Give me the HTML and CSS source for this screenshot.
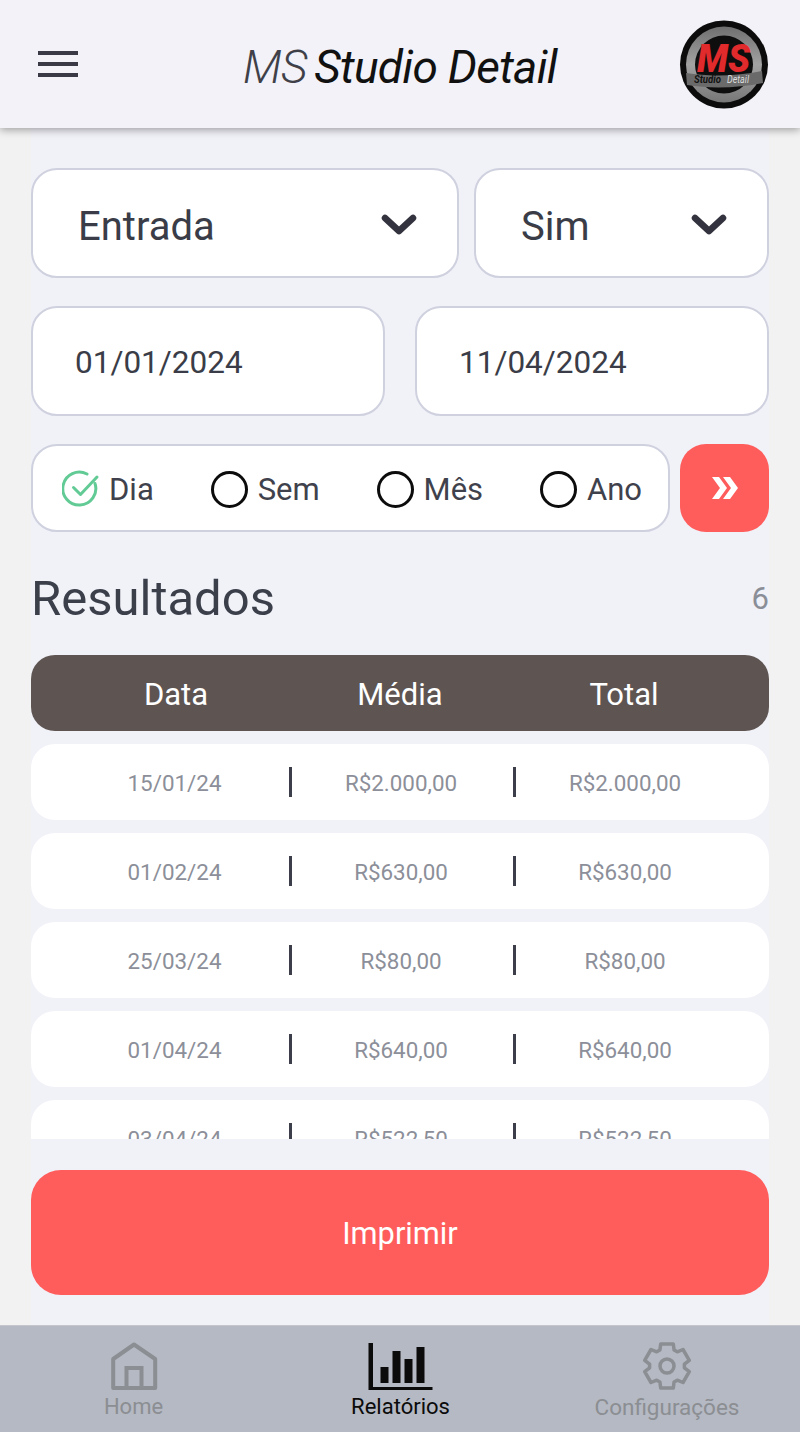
FILE: index.html
```html
<!DOCTYPE html>
<html lang="pt">
<head>
<meta charset="utf-8">
<title>MS Studio Detail</title>
<link rel="stylesheet" href="styles.css">
</head>
<body>
<div class="app">
  <header class="topbar">
    <svg class="menu" viewBox="0 0 40 28" width="40" height="28"><path d="M0 3h40M0 14h40M0 25h40" stroke="#3a3a46" stroke-width="4"/></svg>
    <h1 class="title"><span class="title-ms">MS</span> Studio Detail</h1>
    <svg class="logo" viewBox="0 0 90 90" width="90" height="90">
      <defs>
        <linearGradient id="ring" x1="0" y1="0" x2="0" y2="1">
          <stop offset="0" stop-color="#6f6f6f"/>
          <stop offset=".5" stop-color="#a2a2a2"/>
          <stop offset="1" stop-color="#777"/>
        </linearGradient>
      </defs>
      <circle cx="45" cy="44.500" r="44" fill="#0c0c0c"/>
      <circle cx="45" cy="44.500" r="38" fill="url(#ring)"/>
      <circle cx="45" cy="44.500" r="29" fill="#0e0e0e"/>
      <path d="M7 53c24 4 52 3 76-2l1 12c-25 5-52 6-76 2z" fill="#6a6a6a"/>
      <text class="logo-ms" x="18" y="52" textLength="53" lengthAdjust="spacingAndGlyphs">MS</text>
      <text class="logo-sub" x="15" y="63" textLength="27" lengthAdjust="spacingAndGlyphs">Studio</text>
      <text class="logo-sub2" x="48" y="63" textLength="22" lengthAdjust="spacingAndGlyphs">Detail</text>
    </svg>
  </header>

  <main class="content">
    <div class="row row-selects">
      <div class="field select select-wide"><span>Entrada</span>
        <svg class="chev" viewBox="0 0 36 24" width="36" height="24"><path d="M4 5l14 13L32 5" fill="none" stroke="#33333f" stroke-width="6.500" stroke-linecap="round" stroke-linejoin="round"/></svg>
      </div>
      <div class="field select select-narrow"><span>Sim</span>
        <svg class="chev" viewBox="0 0 36 24" width="36" height="24"><path d="M4 5l14 13L32 5" fill="none" stroke="#33333f" stroke-width="6.500" stroke-linecap="round" stroke-linejoin="round"/></svg>
      </div>
    </div>
    <div class="row row-dates">
      <div class="field date">01/01/2024</div>
      <div class="field date">11/04/2024</div>
    </div>
    <div class="row row-period">
      <div class="field period">
        <div class="opt opt-dia">
          <svg viewBox="0 0 38 38" width="38" height="38"><path d="M33 13.500A16.500 16.500 0 1 1 25 4" fill="none" stroke="#62cb95" stroke-width="3" stroke-linecap="round"/><path d="M11.500 17.500l7 7L35 7" fill="none" stroke="#62cb95" stroke-width="3" stroke-linecap="round" stroke-linejoin="round"/></svg>
          <span>Dia</span>
        </div>
        <div class="opt"><i class="radio"></i><span>Sem</span></div>
        <div class="opt"><i class="radio"></i><span>Mês</span></div>
        <div class="opt"><i class="radio"></i><span>Ano</span></div>
      </div>
      <button class="go" type="button">
        <svg viewBox="0 0 28 24" width="28" height="24"><path d="M1 1h7l8 11-8 11H1l8-11zM12 1h7l8 11-8 11h-7l8-11z" fill="#fff"/></svg>
      </button>
    </div>

    <div class="results-head">
      <h2>Resultados</h2>
      <span class="count">6</span>
    </div>

    <div class="thead"><span>Data</span><span>Média</span><span>Total</span></div>
    <div class="rows">
      <div class="trow"><span class="first">15/01/24</span><span class="mid">R$2.000,00</span><span class="last">R$2.000,00</span></div>
      <div class="trow"><span class="first">01/02/24</span><span class="mid">R$630,00</span><span class="last">R$630,00</span></div>
      <div class="trow"><span class="first">25/03/24</span><span class="mid">R$80,00</span><span class="last">R$80,00</span></div>
      <div class="trow"><span class="first">01/04/24</span><span class="mid">R$640,00</span><span class="last">R$640,00</span></div>
      <div class="trow"><span class="first">03/04/24</span><span class="mid">R$522,50</span><span class="last">R$522,50</span></div>
    </div>

    <button class="print" type="button">Imprimir</button>
  </main>

  <nav class="tabs">
    <div class="tab">
      <svg viewBox="0 0 50 50" width="50" height="50"><path d="M4.200 18L25 3.500 46.200 18v29H4.200z" fill="none" stroke="#8b8e92" stroke-width="4" stroke-linejoin="round"/><path d="M17.500 47V27h15v20" fill="none" stroke="#8b8e92" stroke-width="4"/></svg>
      <span>Home</span>
    </div>
    <div class="tab tab-active">
      <svg viewBox="0 0 66 50" width="66" height="50"><path d="M.500 2h4.500v44h59.500v3H.500z" fill="#0b0b0b"/><path d="M12.500 26h8v16h-8zM24.500 10h8v32h-8zM36.500 18h8v24h-8zM48.500 6h8v36h-8z" fill="#0b0b0b"/></svg>
      <span>Relatórios</span>
    </div>
    <div class="tab tab-config">
      <svg viewBox="0 0 50 50" width="50" height="50"><path d="M17.900 9L18.700 2.900H31.300L32.100 9 35.300 10.800 41 8.500 47.300 19.400 42.400 23.200V26.800L47.300 30.600 41 41.500 35.300 39.200 32.100 41 31.300 47.100H18.700L17.900 41 14.700 39.200 9 41.500 2.700 30.600 7.600 26.800V23.200L2.700 19.400 9 8.500 14.700 10.800z" fill="none" stroke="#8b8e92" stroke-width="3.500" stroke-linejoin="round"/><circle cx="25" cy="25" r="7" fill="none" stroke="#8b8e92" stroke-width="3.500"/></svg>
      <span>Configurações</span>
    </div>
  </nav>
</div>
</body>
</html>
```
FILE: styles.css
```css
* { box-sizing: border-box; }
html, body { margin: 0; padding: 0; }
body {
  background: #f2f2f2;
  font-family: Roboto, "Liberation Sans", sans-serif;
  color: #3a3d47;
}
.app { width: 800px; height: 1432px; display: flex; flex-direction: column; overflow: hidden; }

.topbar {
  height: 128px;
  flex: none;
  display: grid;
  grid-template-columns: 1fr auto 1fr;
  align-items: center;
  background: #f2f2f8;
  box-shadow: 0 2px 8px rgba(0, 0, 0, .35);
  padding: 0 31px;
  position: relative;
  z-index: 1;
}
.menu { margin: 0 0 1px 7px; }
.title {
  margin: 0;
  padding-top: 6px;
  white-space: nowrap;
  font-size: 46px;
  font-weight: 400;
  font-style: italic;
  letter-spacing: -.72px;
  color: #111;
}
.title-ms { color: #3f4048; font-weight: 300; margin-right: -3px; }
.logo { justify-self: end; margin-top: 2px; }
.logo-ms { font: italic 900 39px Roboto, sans-serif; fill: #e02a2c; }
.logo-sub { font: italic 700 10px Roboto, sans-serif; fill: #111; }
.logo-sub2 { font: italic 400 10px Roboto, sans-serif; fill: #ddd; }

.content {
  flex: 1;
  margin: 0 31px;
  background: #f1f1f8;
  padding-top: 40px;
  display: flex;
  flex-direction: column;
}
.row { display: flex; }
.row-selects { gap: 15px; }
.row-dates { gap: 30px; margin-top: 28px; }
.row-period { gap: 10px; margin-top: 28px; }

.field {
  background: #fff;
  border: 2px solid #cfd1df;
  border-radius: 26px;
  display: flex;
  align-items: center;
}
.select {
  height: 110px;
  padding-top: 4px;
  justify-content: space-between;
  font-size: 40px;
  color: #3a3d47;
}
.select span { margin-top: 2px; }
.select-wide { width: 428px; padding-left: 45px; padding-right: 40px; }
.select-narrow { flex: 1; padding-left: 45px; padding-right: 40px; }
.date { flex: 1; height: 110px; font-size: 31.500px; padding: 2px 0 0 42px; }

.period {
  width: 639px;
  height: 88px;
  padding: 2px 26px 0 29px;
  justify-content: space-between;
}
.opt { display: flex; align-items: center; gap: 10px; font-size: 31px; color: #3f424c; }
.opt-dia { gap: 9px; }
.radio {
  display: block;
  width: 37px;
  height: 37px;
  border: 3.500px solid #0c0c0c;
  border-radius: 50%;
}
.go {
  width: 89px;
  height: 88px;
  border: 0;
  padding: 0;
  border-radius: 26px;
  background: #ff5c5c;
  display: flex;
  align-items: center;
  justify-content: center;
}

.results-head {
  display: flex;
  justify-content: space-between;
  align-items: center;
  height: 123px;
  padding-top: 10px;
}
.results-head h2 { margin: 0; font-size: 49px; font-weight: 400; color: #3a3f4a; }
.count { font-size: 31px; color: #8a8e97; }

.thead, .trow {
  height: 76px;
  flex: none;
  display: grid;
  grid-template-columns: repeat(3, 224px);
  align-items: center;
  text-align: center;
  padding-left: 33px;
}
.thead {
  background: #5e5552;
  border-radius: 24px;
  padding-top: 3px;
  color: #fff;
  font-size: 31px;
}
.rows {
  height: 395px;
  flex: none;
  overflow: hidden;
  margin-top: 13px;
  display: flex;
  flex-direction: column;
  gap: 13px;
}
.trow {
  background: #fff;
  border-radius: 24px;
  padding-top: 2px;
  font-size: 22.400px;
  color: #8c8f99;
}
.trow span { line-height: 30px; }
.trow .first { padding-right: 3px; }
.trow .mid, .trow .last { padding-left: 2px; }
.trow .mid { position: relative; }
.trow .mid::before, .trow .mid::after {
  content: "";
  position: absolute;
  top: -1px;
  width: 3px;
  height: 30px;
  background: #3c3f4a;
}
.trow .mid::before { left: 1px; }
.trow .mid::after { right: -4px; }

.print {
  height: 125px;
  flex: none;
  margin-top: 31px;
  border: 0;
  padding: 2px 0 0;
  border-radius: 30px;
  background: #ff5c5c;
  color: #fff;
  font: 400 30.800px Roboto, sans-serif;
}

.tabs {
  height: 107px;
  flex: none;
  background: #b5b9c3;
  border-top: 1px solid #c4c6cc;
  display: grid;
  grid-template-columns: 267px 267px 266px;
}
.tab {
  display: flex;
  flex-direction: column;
  align-items: center;
  padding-top: 15px;
  font-size: 22px;
  color: #8b8e92;
  line-height: 28px;
}
.tab svg { display: block; margin-bottom: 2px; }
.tab-active { color: #0b0b0b; }
.tab-config { font-size: 22.500px; }
```
